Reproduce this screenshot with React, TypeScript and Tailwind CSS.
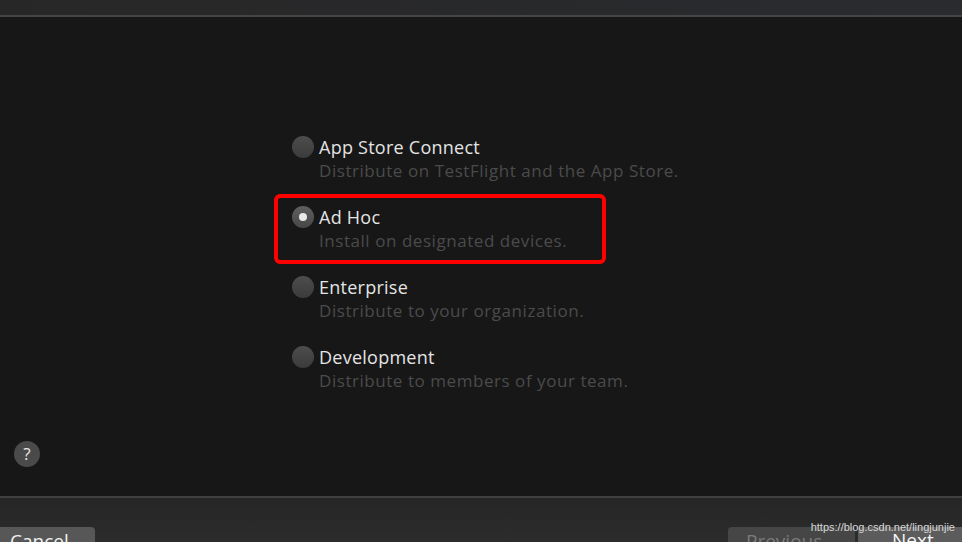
import React from 'react';

type Option = { title: string; subtitle: string; selected?: boolean };

const options: Option[] = [
  { title: 'App Store Connect', subtitle: 'Distribute on TestFlight and the App Store.' },
  { title: 'Ad Hoc', subtitle: 'Install on designated devices.', selected: true },
  { title: 'Enterprise', subtitle: 'Distribute to your organization.' },
  { title: 'Development', subtitle: 'Distribute to members of your team.' },
];

const Radio: React.FC<{ selected?: boolean }> = ({ selected }) => (
  <div
    className={
      'w-[22px] h-[22px] rounded-full flex items-center justify-center shrink-0 ' +
      (selected
        ? 'bg-gradient-to-b from-[#5f5f5f] to-[#474747]'
        : 'bg-gradient-to-b from-[#4d4d4d] to-[#3b3b3b]')
    }
  >
    {selected && <div className="w-[8px] h-[8px] rounded-full bg-[#e8e8e8]" />}
  </div>
);

const App: React.FC = () => {
  return (
    <div
      className="w-[962px] h-[542px] overflow-hidden flex flex-col bg-[#171717]"
      style={{ fontFamily: '"Open Sans", "Liberation Sans", sans-serif' }}
    >
      {/* Top bar */}
      <div className="h-[15px] shrink-0 bg-gradient-to-r from-[#272727] to-[#2a2b2f]" />
      <div className="h-[2px] shrink-0 bg-[#454545]" />

      {/* Main */}
      <div className="flex-1 flex flex-col justify-between pb-[29px]">
        <div className="flex flex-col gap-[22px] pt-[118px] pl-[292px]">
          {options.map((o) => (
            <div key={o.title} className="relative flex gap-[5px]">
              {o.selected && (
                <span className="absolute -left-[18px] -top-[11px] w-[332px] h-[70px] border-[4px] border-[#f00] rounded-[6px]" />
              )}
              <div className="pt-[1px]">
                <Radio selected={o.selected} />
              </div>
              <div className="flex flex-col">
                <span className="text-[18px] leading-[24px] tracking-[0.25px] text-[#e4e4e4]">{o.title}</span>
                <span className="text-[17px] leading-[24px] tracking-[0.55px] text-[#4b4b4b]">{o.subtitle}</span>
              </div>
            </div>
          ))}
        </div>
        <div className="pl-[14px]">
          <div className="w-[26px] h-[26px] rounded-full bg-[#4a4a4a] flex items-center justify-center text-[#e8e8e8] text-[17px]">
            ?
          </div>
        </div>
      </div>

      {/* Bottom bar */}
      <div className="h-[2px] shrink-0 bg-[#404040]" />
      <div className="h-[44px] shrink-0 bg-gradient-to-b from-[#262626] to-[#2c2c2c] flex items-end justify-between relative">
        <div className="w-[95px] h-[15px] bg-[#575757] rounded-tr-[4px] pl-[10px] pt-[2px] text-[19px] leading-[24px] text-[#f0f0f0] overflow-hidden">
          Cancel
        </div>
        <div className="flex gap-[3px] items-end">
          <div className="w-[127px] h-[15px] bg-[#464646] rounded-t-[4px] pl-[18px] pt-[2px] text-[19px] leading-[24px] text-[#7a7a7a] overflow-hidden">
            Previous
          </div>
          <div className="w-[104px] h-[15px] bg-[#5c5c5c] rounded-tl-[4px] pl-[34px] pt-[1px] text-[19px] leading-[24px] text-[#f4f4f4] overflow-hidden">
            Next
          </div>
        </div>
        <span
          className="absolute right-[7px] top-[22px] text-[11px] leading-[14px] text-[#d8d8d8]"
          style={{ fontFamily: '"Liberation Sans", sans-serif' }}
        >
          https://blog.csdn.net/lingjunjie
        </span>
      </div>
    </div>
  );
};

export default App;
